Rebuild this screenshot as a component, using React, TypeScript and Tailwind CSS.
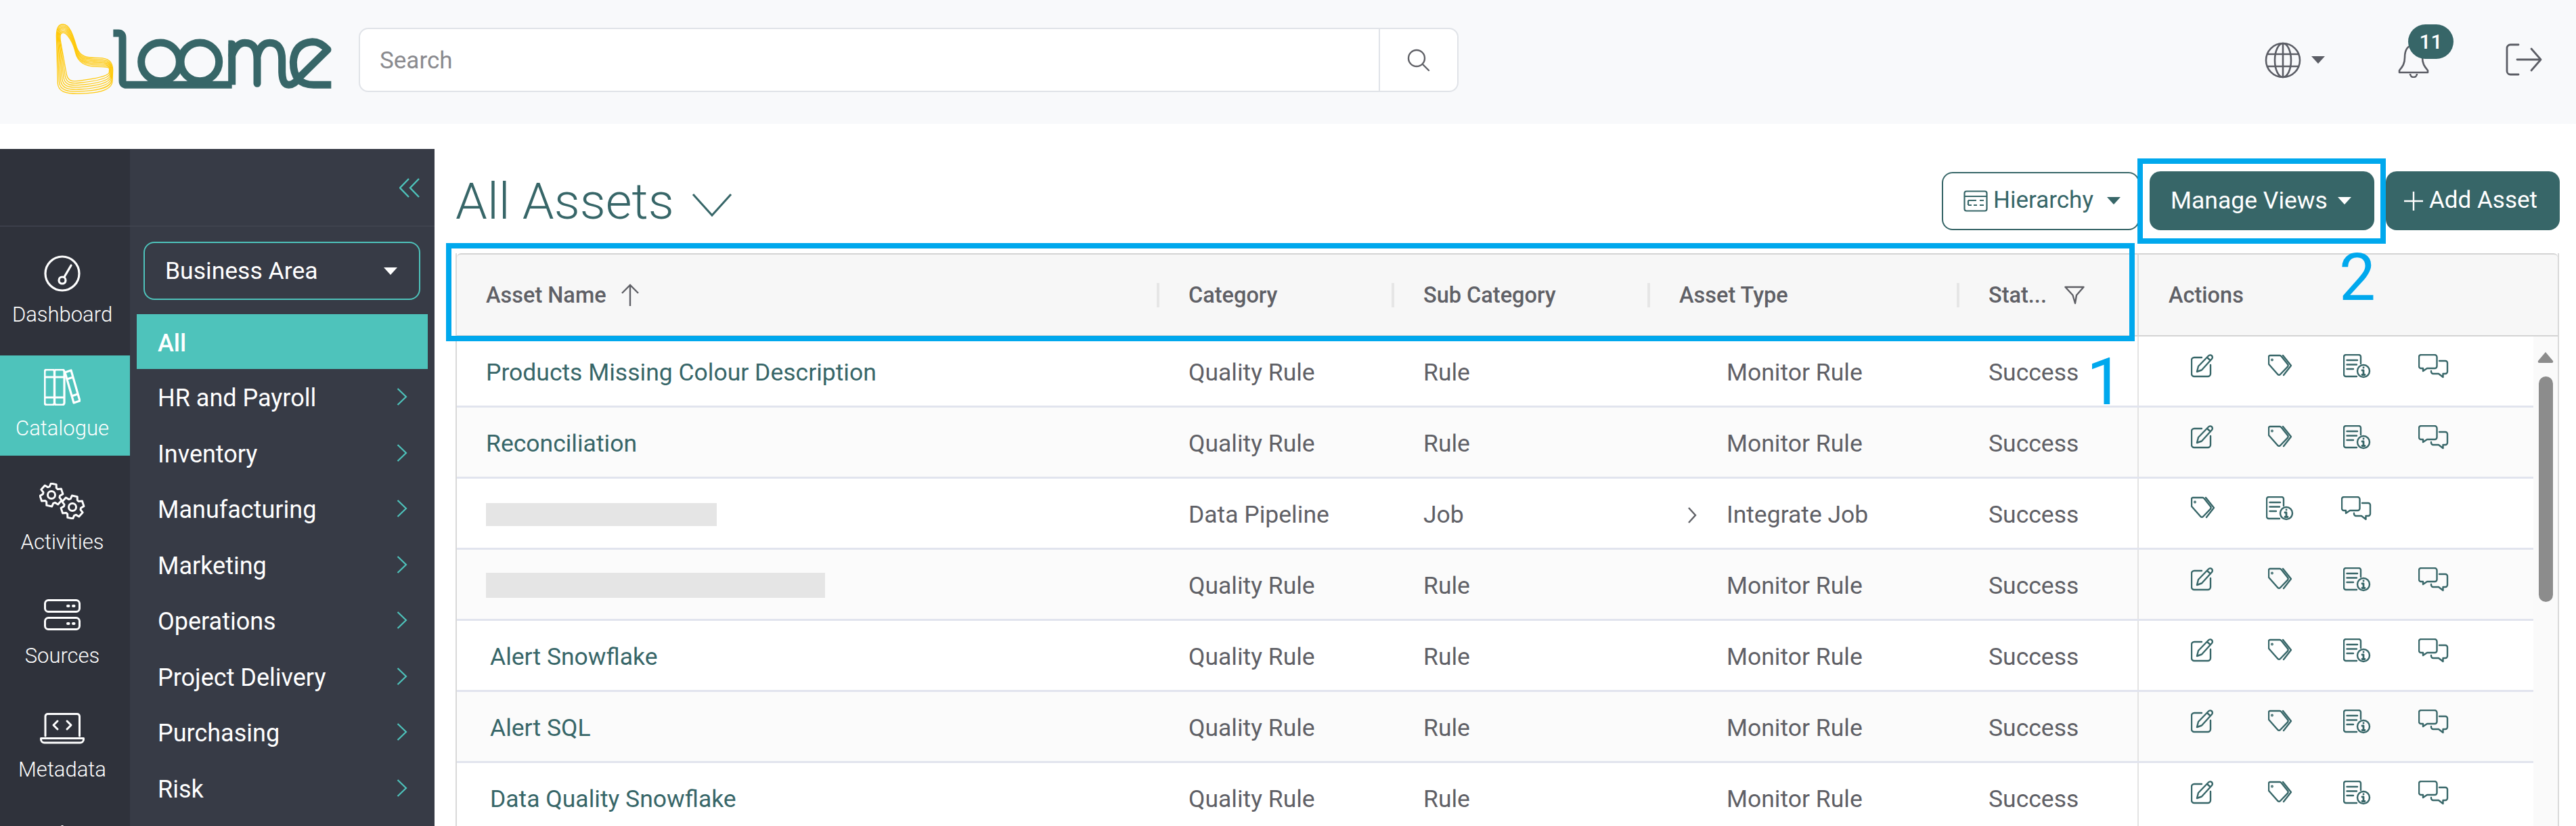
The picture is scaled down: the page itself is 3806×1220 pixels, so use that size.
import React from "react";

const NAV = ["HR and Payroll", "Inventory", "Manufacturing", "Marketing", "Operations", "Project Delivery", "Purchasing", "Risk"];

type Row = { name?: string; bar?: string; inset?: boolean; category: string; sub: string; type: string; expand?: boolean; noEdit?: boolean };

const ROWS: Row[] = [
  { name: "Products Missing Colour Description", category: "Quality Rule", sub: "Rule", type: "Monitor Rule" },
  { name: "Reconciliation", category: "Quality Rule", sub: "Rule", type: "Monitor Rule" },
  { bar: "w-[341px] h-[34px]", category: "Data Pipeline", sub: "Job", type: "Integrate Job", expand: true, noEdit: true },
  { bar: "w-[501px] h-[37px]", category: "Quality Rule", sub: "Rule", type: "Monitor Rule" },
  { name: "Alert Snowflake", inset: true, category: "Quality Rule", sub: "Rule", type: "Monitor Rule" },
  { name: "Alert SQL", inset: true, category: "Quality Rule", sub: "Rule", type: "Monitor Rule" },
  { name: "Data Quality Snowflake", inset: true, category: "Quality Rule", sub: "Rule", type: "Monitor Rule" },
];

const Logo = () => {
  // yellow swirl: same curve interpolated from the outer edge to the inner edge
  const outer = [100,48, 75,48,70,70,70,100, 76,310, 78,345,110,356,170,355, 240,353,315,345,318,300, 320,250, 320,215,300,197,260,197, 200,197,175,190,160,150, 145,100,130,48,100,48];
  const inner = [100,85, 88,85,85,95,88,120, 115,270, 122,300,140,302,170,298, 220,292,296,280,304,262, 305,245, 304,238,290,235,250,235, 195,235,165,215,155,175, 145,130,118,85,100,85];
  const lines = [0, 1, 2, 3, 4, 5, 6].map((i) => {
    const p = outer.map((v, k) => +(v + (inner[k] - v) * (i / 6)).toFixed(1));
    return `M${p[0]} ${p[1]} C${p[2]} ${p[3]} ${p[4]} ${p[5]} ${p[6]} ${p[7]} L${p[8]} ${p[9]} C${p[10]} ${p[11]} ${p[12]} ${p[13]} ${p[14]} ${p[15]} C${p[16]} ${p[17]} ${p[18]} ${p[19]} ${p[20]} ${p[21]} L${p[22]} ${p[23]} C${p[24]} ${p[25]} ${p[26]} ${p[27]} ${p[28]} ${p[29]} C${p[30]} ${p[31]} ${p[32]} ${p[33]} ${p[34]} ${p[35]} C${p[36]} ${p[37]} ${p[38]} ${p[39]} ${p[40]} ${p[41]}`;
  });
  return (
    <svg width="460" height="130" viewBox="0 0 1380 390" fill="none" className="shrink-0">
      {lines.map((d, i) => <path key={i} d={d} stroke="#ffc90b" strokeWidth="3.8" />)}
      <g stroke="#376668" strokeWidth="33" strokeLinejoin="round">
        <path d="M322 87 H345 Q363 87 363 107 V298 Q363 316 381 316 H848" />
        <circle cx="531" cy="214" r="85" />
        <circle cx="706" cy="214" r="85" />
        <path d="M832 135 H848 V316" />
        <path strokeLinecap="round" d="M848 185 Q870 130 905 130 Q960 130 960 205 V310" />
        <path d="M960 190 Q975 130 1015 130 Q1070 130 1070 205 V260 Q1072 316 1100 316 Q1125 316 1150 280 L1272 160 Q1240 125 1205 125 Q1125 130 1120 215 Q1120 316 1210 316 H1288" />
      </g>
    </svg>
  );
};

const Caret = ({ className }: { className: string }) => (
  <svg width="20" height="11" viewBox="0 0 20 11" className={className}>
    <path d="M0 0 H20 L10 11 Z" fill="currentColor" />
  </svg>
);

const GEAR = (cx: number, cy: number, r: number) => {
  const pts: string[] = [];
  for (let i = 0; i < 6; i++) {
    const a = (i * Math.PI) / 3 - Math.PI / 2 + 0.2;
    [[-0.42, r * 0.74], [-0.24, r], [0.24, r], [0.42, r * 0.74]].forEach(([da, rr]) => {
      pts.push(`${(cx + Math.cos(a + da) * rr).toFixed(1)} ${(cy + Math.sin(a + da) * rr).toFixed(1)}`);
    });
  }
  return "M" + pts.join(" L") + " Z";
};

const RAIL = [
  {
    label: "Dashboard",
    icon: (
      <svg width="54" height="54" viewBox="0 0 54 54" fill="none" stroke="currentColor" strokeWidth="3.2">
        <circle cx="27" cy="27" r="25" />
        <circle cx="27" cy="37" r="5" />
        <path strokeLinecap="round" d="M30 32 L40 15" />
      </svg>
    ),
  },
  {
    label: "Catalogue",
    active: true,
    icon: (
      <svg width="54" height="54" viewBox="0 0 54 54" fill="none" stroke="currentColor" strokeWidth="3.2" strokeLinejoin="round">
        <rect x="1" y="1" width="14.5" height="52" rx="3" />
        <rect x="15.5" y="1" width="14.5" height="52" rx="3" />
        <path d="M1 12 H30 M1 42 H30" />
        <path d="M31 5 L40 2 L53 47 L44 50 Z M34 15 L43 12 M41 40 L50 37" />
      </svg>
    ),
  },
  {
    label: "Activities",
    icon: (
      <svg width="68" height="54" viewBox="0 0 68 54" fill="none" stroke="currentColor" strokeWidth="3" strokeLinejoin="round">
        <path d={GEAR(18, 18, 17)} />
        <circle cx="18" cy="18" r="5.5" />
        <path d={GEAR(49, 36, 17)} />
        <circle cx="49" cy="36" r="5.5" />
      </svg>
    ),
  },
  {
    label: "Sources",
    low: true,
    icon: (
      <svg width="54" height="46" viewBox="0 0 54 46" fill="none" stroke="currentColor" strokeWidth="3">
        <rect x="1.5" y="1.5" width="51" height="17" rx="5" />
        <rect x="1.5" y="27.5" width="51" height="17" rx="5" />
        <path strokeWidth="4" strokeLinecap="round" d="M35 10 H36.5 M43 10 H44.5 M35 36 H36.5 M43 36 H44.5" />
      </svg>
    ),
  },
  {
    label: "Metadata",
    low: true,
    icon: (
      <svg width="66" height="46" viewBox="0 0 66 46" fill="none" stroke="currentColor" strokeWidth="3" strokeLinejoin="round" strokeLinecap="round">
        <path d="M8 34 V5 a3.5 3.5 0 0 1 3.5 -3.5 H55 a3.5 3.5 0 0 1 3.5 3.5 V34" />
        <path d="M1.5 37.5 H64.5 V39 a5 5 0 0 1 -5 5 H6.5 a5 5 0 0 1 -5 -5 Z" />
        <path d="M26 12 L20 18 L26 24 M40 12 L46 18 L40 24" />
      </svg>
    ),
  },
  {
    label: "",
    icon: (
      <svg width="54" height="46" viewBox="0 0 54 46" fill="none" stroke="currentColor" strokeWidth="3">
        <path d="M27 2 V30" />
      </svg>
    ),
  },
];

const Rail = () => (
  <div className="w-[192px] shrink-0 bg-[#2f323b] flex flex-col">
    <div className="h-[115px] shrink-0 border-b-2 border-[#3c3f4a] mb-[22px]" />
    <div className="flex flex-col gap-[20px]">
      {RAIL.map((r) => (
        <div key={r.label} className={`h-[148px] shrink-0 flex flex-col items-center pr-[8px] text-white ${r.active ? "bg-[#4ec3bb]" : ""}`}>
          <div className={`h-[72px] mt-[20px] shrink-0 ${r.low ? "pt-[4px]" : ""}`}>{r.icon}</div>
          <span className="text-[31px] leading-[40px] font-light -mt-[4px]">{r.label}</span>
        </div>
      ))}
    </div>
  </div>
);

const Panel = () => (
  <div className="w-[450px] shrink-0 bg-[#373b46] flex flex-col">
    <div className="h-[115px] shrink-0 border-b-2 border-[#3f434e] flex justify-end items-start pt-[43px] pr-[22px] mb-[22px]">
      <svg width="30" height="29" viewBox="0 0 30 29" fill="none" stroke="#4ec3bb" strokeWidth="2.4">
        <path d="M14 1 L1 14.5 L14 28 M29 1 L16 14.5 L29 28" />
      </svg>
    </div>
    <div className="ml-[20px] w-[409px] h-[86px] shrink-0 border-2 border-[#4ec3bb] rounded-[16px] flex items-center justify-between pl-[30px] pr-[32px] mb-[21px]">
      <span className="text-white text-[35.5px] pt-[2px]">Business Area</span>
      <Caret className="text-white" />
    </div>
    <div className="ml-[10px] w-[430px] h-[81px] bg-[#4ec3bb] flex items-center pl-[31px] pt-[4px] text-white text-[36px] font-medium shrink-0">All</div>
    {NAV.map((n) => (
      <div key={n} className="ml-[10px] w-[430px] h-[82.5px] shrink-0 flex items-center justify-between pl-[31px] pr-[30px] text-white text-[36px]">
        <span className="pt-[4px]">{n}</span>
        <svg width="16" height="26" viewBox="0 0 16 26" fill="none" stroke="#4ec3bb" strokeWidth="2.2">
          <path d="M1.5 1 L14 13 L1.5 25" />
        </svg>
      </div>
    ))}
  </div>
);

const EditIcon = () => (
  <svg width="36" height="36" viewBox="0 0 36 36" fill="none" stroke="#376668" strokeWidth="2.4" strokeLinejoin="round" strokeLinecap="round">
    <path d="M16 5 H5 a4 4 0 0 0 -4 4 V29 a4 4 0 0 0 4 4 H25 a4 4 0 0 0 4 -4 V16" />
    <path d="M9 26 L11 18 L26 2.5 a3 3 0 0 1 5 4.5 L16 23.5 Z M24 5 L29 9.5" />
  </svg>
);
const TagIcon = () => (
  <svg width="36" height="36" viewBox="0 0 36 36" fill="none" stroke="#376668" strokeWidth="2.4" strokeLinejoin="round" strokeLinecap="round">
    <path d="M3 2 H17 a3 3 0 0 1 2.6 1.2 L29 15 a3 3 0 0 1 0 3.6 L18 30 a2.4 2.4 0 0 1 -3.6 0 L1.6 15.5 A3 3 0 0 1 1 14 V4 a2 2 0 0 1 2 -2 Z" />
    <path d="M22 2 L34 17 L23 31" />
    <circle cx="6" cy="8.5" r="0.7" />
  </svg>
);
const InfoIcon = () => (
  <svg width="42" height="36" viewBox="0 0 42 36" fill="none" stroke="#376668" strokeWidth="2.4" strokeLinejoin="round" strokeLinecap="round">
    <path d="M26 14 V4 a3 3 0 0 0 -3 -3 H4 a3 3 0 0 0 -3 3 V30 a3 3 0 0 0 3 3 H20" />
    <path d="M5.5 9 H21 M5.5 15.5 H20 M5.5 22 H15" />
    <circle cx="30" cy="25" r="9" />
    <path strokeWidth="2.8" d="M30 24 V30 M28 24 H30 M28 30.5 H32 M30 20 H30.1" />
  </svg>
);
const ChatIcon = () => (
  <svg width="46" height="36" viewBox="0 0 46 36" fill="none" stroke="#376668" strokeWidth="2.4" strokeLinejoin="round" strokeLinecap="round">
    <path d="M4 1 H24 a3.5 3.5 0 0 1 3.5 3.5 V18 a3 3 0 0 1 -3 3 H13 L7 25 V21 H4 a3 3 0 0 1 -3 -3 V4 a3 3 0 0 1 3 -3 Z" />
    <path d="M31 10 H40 a3 3 0 0 1 3 3 V26 a3 3 0 0 1 -3 3 H36.5 V34 L30 29 H22 a3 3 0 0 1 -3 -3 V25" />
  </svg>
);

const Header = () => (
  <div className="h-[183px] bg-[#f8f9fb] flex items-start pl-[60px] pr-[50px]">
    <div className="mt-[20px]"><Logo /></div>
    <div className="ml-[10px] mt-[41px] w-[1625px] h-[95px] bg-white border-2 border-[#e0e3e8] rounded-[14px] flex items-center">
      <span className="flex-1 pl-[29px] pt-[4px] text-[35px] text-[#8a8a8e]">Search</span>
      <div className="w-[116px] h-full border-l-2 border-[#e0e3e8] flex items-center justify-center">
        <svg width="36" height="36" viewBox="0 0 36 36" fill="none" stroke="#5f6066" strokeWidth="2.4" strokeLinecap="round">
          <circle cx="15" cy="15" r="12" />
          <path d="M24 24 L33 33" />
        </svg>
      </div>
    </div>
    <div className="ml-auto mt-[36px] flex items-start text-[#5b5d65]">
      <svg width="54" height="54" viewBox="0 0 54 54" fill="none" stroke="currentColor" strokeWidth="2.6" className="mt-[26px]">
        <circle cx="27" cy="27" r="25" />
        <ellipse cx="27" cy="27" rx="12" ry="25" />
        <path d="M27 2 V52 M3 18 H51 M3 36 H51" />
      </svg>
      <Caret className="mt-[47px] ml-[15px]" />
      <div className="relative ml-[108px] w-[82px] h-[78px]">
        <svg width="46" height="50" viewBox="0 0 46 50" fill="none" stroke="currentColor" strokeWidth="2.6" strokeLinejoin="round" className="absolute left-0 top-[29px]">
          <path d="M23 2 C12 2 10 12 10 20 C10 30 6 34 2 39 V42 H44 V39 C40 34 36 30 36 20 C36 12 34 2 23 2 Z" />
          <path d="M18 44 a5 5 0 0 0 10 0" />
        </svg>
        <span className="absolute left-[15px] top-0 w-[67px] h-[51px] rounded-[26px] bg-[#376668] text-white text-[30px] font-medium flex items-center justify-center">11</span>
      </div>
      <svg width="54" height="48" viewBox="0 0 54 48" fill="none" stroke="currentColor" strokeWidth="2.8" strokeLinecap="round" strokeLinejoin="round" className="ml-[77px] mt-[28px]">
        <path d="M19 2 H7 a5 5 0 0 0 -5 5 V41 a5 5 0 0 0 5 5 H19" />
        <path d="M17 24 H51 M38 8 L52 24 L38 40" />
      </svg>
    </div>
  </div>
);

const HeadCell = ({ label, sep, className }: { label: string; sep?: boolean; className?: string }) => (
  <div className={`flex items-center ${className || ""}`}>
    {sep && <span className="w-[4px] h-[36px] bg-[#e6e6e6] mr-[43px] shrink-0" />}
    <span className="pt-[2px]">{label}</span>
  </div>
);

const Table = () => (
  <div className="mt-[34px] ml-[31px] w-[3108px] border-x-2 border-[#d9d9d9] h-[847px] overflow-hidden flex flex-col">
    <div className="h-[123px] shrink-0 grid grid-cols-[1034px_347px_378px_457px_267px_621px] bg-[#f7f7f7] border-t-2 border-b-2 border-[#d4d4d4] rounded-t-[6px] text-[32.5px] font-medium text-[#5f6066]">
      <div className="flex items-center pl-[43px]">
        <span className="pt-[2px]">Asset Name</span>
        <svg width="28" height="34" viewBox="0 0 28 34" fill="none" stroke="#5f6066" strokeWidth="2.4" className="ml-[21px]">
          <path d="M14 33 V2 M2 14 L14 2 L26 14" />
        </svg>
      </div>
      <HeadCell label="Category" sep />
      <HeadCell label="Sub Category" sep />
      <HeadCell label="Asset Type" sep />
      <div className="flex items-center">
        <span className="w-[4px] h-[36px] bg-[#e6e6e6] mr-[43px] shrink-0" />
        <span className="pt-[2px]">Stat...</span>
        <svg width="30" height="28" viewBox="0 0 30 28" fill="none" stroke="#5f6066" strokeWidth="2.4" strokeLinejoin="round" className="ml-[26px]">
          <path d="M1.5 2 H28.5 L18 14 L16 26 L12.5 14 Z" />
        </svg>
      </div>
      <div className="flex items-center pl-[44px] pt-[2px] border-l-2 border-[#d9d9d9]">Actions</div>
    </div>
    <div className="flex flex-1 min-h-0">
      <div className="w-[3068px] shrink-0">
        {ROWS.map((r, i) => (
          <div key={i} className={`h-[105px] grid grid-cols-[1034px_347px_378px_457px_267px_585px] border-b-[3px] border-[#e1e4ee] text-[35.5px] text-[#5f6066] ${i % 2 ? "bg-[#fbfbfb]" : "bg-white"}`}>
            <div className={`flex items-center text-[#376668] ${r.bar ? "pt-[3px]" : "pt-[6px]"} ${r.inset ? "pl-[49px]" : "pl-[43px]"}`}>
              {r.bar ? <span className={`bg-[#e5e5e5] ${r.bar}`} /> : r.name}
            </div>
            <div className="flex items-center pt-[6px] pl-[47px]">{r.category}</div>
            <div className="flex items-center pt-[6px] pl-[47px]">{r.sub}</div>
            <div className="flex items-center pt-[6px] pl-[59px]">
              <span className="w-[58px] shrink-0">
                {r.expand && (
                  <svg width="14" height="26" viewBox="0 0 14 26" fill="none" stroke="#5f6066" strokeWidth="2.4">
                    <path d="M2 2 L12 13 L2 24" />
                  </svg>
                )}
              </span>
              {r.type}
            </div>
            <div className="flex items-center pt-[6px] pl-[47px]">Success</div>
            <div className="flex items-start pt-[26px] pl-[77px] border-l-2 border-[#e3e3e3]">
              {!r.noEdit && <span className="w-[114px]"><EditIcon /></span>}
              <span className="w-[111px]"><TagIcon /></span>
              <span className="w-[111px]"><InfoIcon /></span>
              <span className="w-[111px]"><ChatIcon /></span>
            </div>
          </div>
        ))}
      </div>
      <div className="flex-1 bg-[#fafafa] flex flex-col items-center pt-[22px]">
        <svg width="24" height="17" viewBox="0 0 24 17" className="shrink-0">
          <path d="M12 1 L23 14 Q24 17 21 17 H3 Q0 17 1 14 Z" fill="#8c8c8c" />
        </svg>
        <div className="w-[21px] h-[333px] mt-[20px] rounded-full bg-[#8c8c8c]" />
      </div>
    </div>
  </div>
);

const Toolbar = () => (
  <div className="h-[120px] shrink-0 flex items-start pl-[31px] pr-[24px] pt-[33px]">
    <div className="flex items-center text-[#376668]">
      <span className="text-[75px] leading-[87px] font-light pt-[1px]">All Assets</span>
      <svg width="60" height="36" viewBox="0 0 60 36" fill="none" stroke="currentColor" strokeWidth="3" className="ml-[26px] mt-[12px]">
        <path d="M2 2 L30 33 L58 2" />
      </svg>
    </div>
    <div className="ml-auto flex items-center">
      <div className="w-[292px] h-[86px] border-2 border-[#376668] rounded-[16px] flex items-center pl-[30px] text-[#376668] text-[35px]">
        <svg width="36" height="32" viewBox="0 0 36 32" fill="none" stroke="currentColor" strokeWidth="2.2" className="shrink-0 mr-[8px]">
          <rect x="1.5" y="1.5" width="33" height="29" rx="3" />
          <path d="M1.5 9 H34.5 M7 15 H19 M7 22 H12 M7 15 V22 M15 22 H20 M24 15 H30 M24 22 H30" />
        </svg>
        Hierarchy
        <Caret className="ml-[20px] shrink-0" />
      </div>
      <div className="ml-[15px] w-[332px] h-[87px] rounded-[16px] bg-[#376668] text-white text-[35.5px] flex items-center pl-[31px]">
        Manage Views
        <Caret className="ml-[15px] shrink-0" />
      </div>
      <div className="ml-[17px] w-[257px] h-[87px] rounded-[16px] bg-[#376668] text-white text-[35px] flex items-center pl-[26px]">
        <svg width="30" height="30" viewBox="0 0 30 30" fill="none" stroke="currentColor" strokeWidth="2.4" className="shrink-0 mr-[8px]">
          <path d="M15 1 V29 M1 15 H29" />
        </svg>
        Add Asset
      </div>
    </div>
  </div>
);

export default function App() {
  return (
    <div className="relative w-[3806px] h-[1220px] overflow-hidden bg-white" style={{ fontFamily: "Roboto, sans-serif" }}>
      <Header />
      <div className="flex h-[1000px] mt-[37px]">
        <Rail />
        <Panel />
        <div className="flex-1 min-w-0 flex flex-col">
          <Toolbar />
          <Table />
        </div>
      </div>
      {/* annotation boxes drawn over the screenshot */}
      <div className="absolute left-[659px] top-[359px] w-[2495px] h-[145px] border-[8px] border-[#00a8ed]" />
      <div className="absolute left-[3158px] top-[234px] w-[367px] h-[126px] border-[8px] border-[#00a8ed]" />
      <span className="absolute left-[3083px] top-[508px] text-[96px] leading-[112px] text-[#00a8ed]">1</span>
      <span className="absolute left-[3456px] top-[354px] text-[96px] leading-[112px] text-[#00a8ed]">2</span>
    </div>
  );
}
